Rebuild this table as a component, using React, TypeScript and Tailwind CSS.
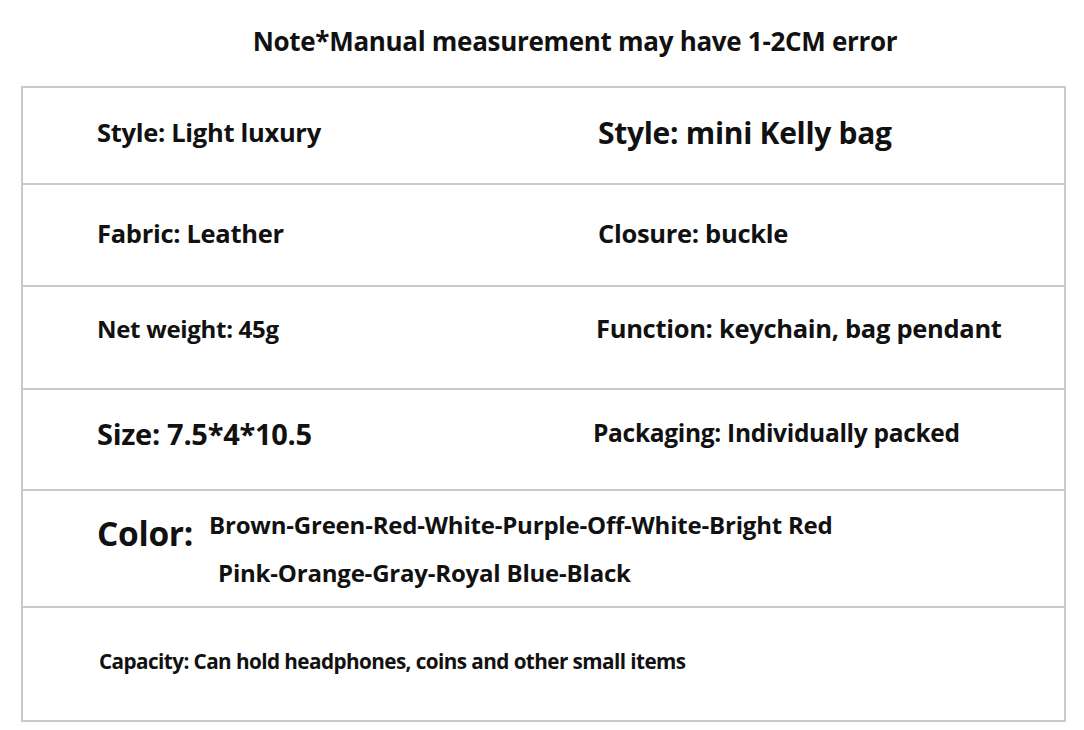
const rows: { left: string; leftSize: string; right?: string; rightSize?: string; h: string; rightPad: string; shift: string }[] = [
  { left: 'Style: Light luxury', leftSize: 'text-[25.5px]', right: 'Style: mini Kelly bag', rightSize: 'text-[30px]', h: 'h-[97px]', rightPad: 'pl-0', shift: '-mt-[6px]' },
  { left: 'Fabric: Leather', leftSize: 'text-[25.5px]', right: 'Closure: buckle', rightSize: 'text-[25.5px]', h: 'h-[102px]', rightPad: 'pl-0', shift: '-mt-[4px]' },
  { left: 'Net weight: 45g', leftSize: 'text-[24px]', right: 'Function: keychain, bag pendant', rightSize: 'text-[25.5px]', h: 'h-[103px]', rightPad: '-ml-[2px]', shift: '-mt-[18px]' },
  { left: 'Size: 7.5*4*10.5', leftSize: 'text-[29px]', right: 'Packaging: Individually packed', rightSize: 'text-[24.5px]', h: 'h-[101px]', rightPad: '-ml-[5px]', shift: '-mt-[12px]' },
];

export default function App() {
  return (
    <div
      className="w-[1084px] h-[730px] bg-white text-[#111] font-bold overflow-hidden"
      style={{ fontFamily: '"Open Sans", "Noto Sans", sans-serif' }}
    >
      <div className="h-[86px] flex items-start justify-center pl-[66px] pt-[24px]">
        <h1 className="text-[26px] leading-[34px] tracking-[-0.3px]">Note*Manual measurement may have 1-2CM error</h1>
      </div>

      <div className="ml-[21px] w-[1045px] border-2 border-[#c9c9c9]">
        {rows.map((r) => (
          <div key={r.left} className={`${r.h} grid grid-cols-[575px_1fr] items-center border-b-2 border-[#c9c9c9]`}>
            <div className={`pl-[74px] ${r.leftSize} ${r.shift} tracking-[-0.3px]`}>{r.left}</div>
            <div className={`${r.rightSize} ${r.rightPad} ${r.shift} tracking-[-0.3px]`}>{r.right}</div>
          </div>
        ))}

        <div className="h-[117px] flex items-start border-b-2 border-[#c9c9c9] pl-[74px] pt-[10px]">
          <span className="text-[33.5px] leading-[50px] mt-[7px] tracking-[-0.3px]">Color:</span>
          <div className="ml-[16px] text-[24px] leading-[48px] tracking-[-0.2px]">
            <div>Brown-Green-Red-White-Purple-Off-White-Bright Red</div>
            <div className="pl-[9px]">Pink-Orange-Gray-Royal Blue-Black</div>
          </div>
        </div>

        <div className="h-[112px] flex items-center pl-[76px] pb-[8px]">
          <span className="text-[22px] tracking-[-0.6px] origin-left scale-x-[0.94] inline-block whitespace-nowrap">
            Capacity: Can hold headphones, coins and other small items
          </span>
        </div>
      </div>
    </div>
  );
}
